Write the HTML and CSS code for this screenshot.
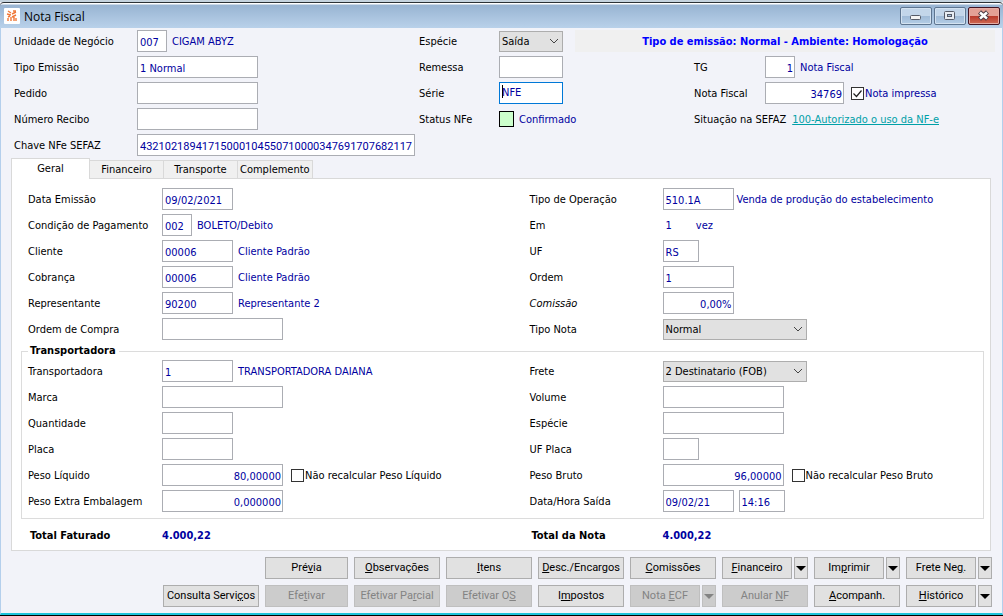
FILE: index.html
```html
<!DOCTYPE html>
<html lang="pt-BR">
  <head>
    <meta charset="UTF-8" />
    <meta name="viewport" content="width=device-width, initial-scale=1.0" />
    <title>Nota Fiscal</title>
    <link rel="stylesheet" href="styles.css">
  </head>
  <body>
    <header class="titlebar">
      <svg class="app-icon" viewBox="0 0 16 16" aria-hidden="true">
        <rect width="16" height="16" rx="1" fill="#fff" />
        <path d="M4 3l3 2M9 3l3 0M3 6l4 1M8 6l4-2M4 9l2-1M8 9l4-2M4 10v3M7 9v4M10 9v4M12 10v3" fill="none" stroke="#f07838" stroke-width="1.4" />
      </svg>
      <h1>Nota Fiscal</h1>
      <div class="window-buttons">
        <button type="button" aria-label="Minimizar">
          <svg viewBox="0 0 30 16"><rect x="9.5" y="7.5" width="10" height="4" rx="1" fill="#f4f4f4" stroke="#555b68" /></svg>
        </button>
        <button type="button" aria-label="Maximizar">
          <svg viewBox="0 0 30 16"><rect x="9.5" y="3.5" width="10" height="8" rx="1" fill="#e8edf3" stroke="#555b68" /><rect x="12.5" y="6.5" width="4" height="2" fill="#a9c3de" stroke="#555b68" /></svg>
        </button>
        <button type="button" class="close" aria-label="Fechar">
          <svg viewBox="0 0 30 16"><path d="M10.5 4l8 7M18.5 4l-8 7" stroke="#4b3a44" stroke-width="4.5" /><path d="M11 4.5l7 6M18 4.5l-7 6" stroke="#fff" stroke-width="2.5" /></svg>
        </button>
      </div>
    </header>

    <main>
      <section class="form-grid header-form">
        <label for="unidade">Unidade de Negócio</label>
        <div class="field"><input type="text" id="unidade" class="w-code" value="007" /><output>CIGAM ABYZ</output></div>
        <label for="especieNota">Espécie</label>
        <div class="field"><select id="especieNota" class="w-small"><option>Saída</option></select></div>
        <p class="banner">Tipo de emissão: Normal - Ambiente: Homologação</p>

        <label for="tipoEmissao">Tipo Emissão</label>
        <div class="field"><input type="text" id="tipoEmissao" class="w-large" value="1 Normal" /></div>
        <label for="remessa">Remessa</label>
        <div class="field span"><input type="text" id="remessa" class="w-small" /></div>
        <label for="tg">TG</label>
        <div class="field"><input type="text" id="tg" class="w-code number" value="1" /><output>Nota Fiscal</output></div>

        <label for="pedido">Pedido</label>
        <div class="field"><input type="text" id="pedido" class="w-large" /></div>
        <label for="serie">Série</label>
        <div class="field span"><div class="editing"><input type="text" id="serie" class="w-small" value="NFE" /></div></div>
        <label for="notaFiscal">Nota Fiscal</label>
        <div class="field"><input type="text" id="notaFiscal" class="w-note number" value="34769" /><label class="check printed"><input type="checkbox" checked />Nota impressa</label></div>

        <label for="recibo">Número Recibo</label>
        <div class="field"><input type="text" id="recibo" class="w-large" /></div>
        <span>Status NFe</span>
        <div class="field span"><div class="status-color"></div><output>Confirmado</output></div>
        <div class="field span sefaz"><span>Situação na SEFAZ</span><a href="#">100-Autorizado o uso da NF-e</a></div>

        <label for="chave">Chave NFe SEFAZ</label>
        <div class="field"><input type="text" id="chave" class="w-key" value="43210218941715000104550710000347691707682117" /></div>
      </section>

      <nav class="tabs">
        <button type="button" class="active">Geral</button>
        <button type="button">Financeiro</button>
        <button type="button">Transporte</button>
        <button type="button">Complemento</button>
      </nav>

      <section class="panel">
        <div class="form-grid">
          <label for="dataEmissao">Data Emissão</label>
          <div class="field"><input type="text" id="dataEmissao" class="w-medium" value="09/02/2021" /></div>
          <label for="operacao">Tipo de Operação</label>
          <div class="field"><input type="text" id="operacao" class="w-medium" value="510.1A" /><output class="tight">Venda de produção do estabelecimento</output></div>

          <label for="condicao">Condição de Pagamento</label>
          <div class="field"><input type="text" id="condicao" class="w-code" value="002" /><output>BOLETO/Debito</output></div>
          <span>Em</span>
          <div class="field times"><output>1</output><output>vez</output></div>

          <label for="cliente">Cliente</label>
          <div class="field"><input type="text" id="cliente" class="w-medium" value="00006" /><output>Cliente Padrão</output></div>
          <label for="uf">UF</label>
          <div class="field"><input type="text" id="uf" class="w-uf" value="RS" /></div>

          <label for="cobranca">Cobrança</label>
          <div class="field"><input type="text" id="cobranca" class="w-medium" value="00006" /><output>Cliente Padrão</output></div>
          <label for="ordem">Ordem</label>
          <div class="field"><input type="text" id="ordem" class="w-medium" value="1" /></div>

          <label for="representante">Representante</label>
          <div class="field"><input type="text" id="representante" class="w-medium" value="90200" /><output>Representante 2</output></div>
          <label for="comissao"><em>Comissão</em></label>
          <div class="field"><input type="text" id="comissao" class="w-medium number" value="0,00%" /></div>

          <label for="ordemCompra">Ordem de Compra</label>
          <div class="field"><input type="text" id="ordemCompra" class="w-large" /></div>
          <label for="tipoNota">Tipo Nota</label>
          <div class="field"><select id="tipoNota" class="w-select"><option>Normal</option></select></div>
        </div>

        <fieldset>
          <legend>Transportadora</legend>
          <div class="form-grid">
            <label for="transportadora">Transportadora</label>
            <div class="field"><input type="text" id="transportadora" class="w-medium" value="1" /><output>TRANSPORTADORA DAIANA</output></div>
            <label for="frete">Frete</label>
            <div class="field"><select id="frete" class="w-select"><option>2 Destinatario (FOB)</option></select></div>

            <label for="marca">Marca</label>
            <div class="field"><input type="text" id="marca" class="w-large" /></div>
            <label for="volume">Volume</label>
            <div class="field"><input type="text" id="volume" class="w-large" /></div>

            <label for="quantidade">Quantidade</label>
            <div class="field"><input type="text" id="quantidade" class="w-medium" /></div>
            <label for="especie">Espécie</label>
            <div class="field"><input type="text" id="especie" class="w-large" /></div>

            <label for="placa">Placa</label>
            <div class="field"><input type="text" id="placa" class="w-medium" /></div>
            <label for="ufPlaca">UF Placa</label>
            <div class="field"><input type="text" id="ufPlaca" class="w-uf" /></div>

            <label for="pesoLiquido">Peso Líquido</label>
            <div class="field"><input type="text" id="pesoLiquido" class="w-large number" value="80,00000" /><label class="check"><input type="checkbox" />Não recalcular Peso Líquido</label></div>
            <label for="pesoBruto">Peso Bruto</label>
            <div class="field"><input type="text" id="pesoBruto" class="w-large number" value="96,00000" /><label class="check"><input type="checkbox" />Não recalcular Peso Bruto</label></div>

            <label for="pesoExtra">Peso Extra Embalagem</label>
            <div class="field"><input type="text" id="pesoExtra" class="w-large number" value="0,000000" /></div>
            <label for="dataSaida">Data/Hora Saída</label>
            <div class="field"><input type="text" id="dataSaida" class="w-medium" value="09/02/21" /><input type="text" class="w-time" aria-label="Hora Saída" value="14:16" /></div>
          </div>
        </fieldset>

        <div class="form-grid totals">
          <span>Total Faturado</span>
          <output>4.000,22</output>
          <span>Total da Nota</span>
          <output>4.000,22</output>
        </div>
      </section>

      <footer class="actions">
        <button type="button" class="second">Pré<u>v</u>ia</button>
        <button type="button"><u>O</u>bservações</button>
        <button type="button"><u>I</u>tens</button>
        <button type="button"><u>D</u>esc./Encargos</button>
        <button type="button"><u>C</u>omissões</button>
        <div class="split"><button type="button"><u>F</u>inanceiro</button><button type="button" class="drop" aria-label="Mais opções de Financeiro"></button></div>
        <div class="split"><button type="button">Im<u>p</u>rimir</button><button type="button" class="drop" aria-label="Mais opções de Imprimir"></button></div>
        <div class="split"><button type="button">Frete Ne<u>g</u>.</button><button type="button" class="drop" aria-label="Mais opções de Frete"></button></div>

        <button type="button">Consulta Servi<u>ç</u>os</button>
        <button type="button" disabled>Efe<u>t</u>ivar</button>
        <button type="button" disabled>Efetivar Pa<u>r</u>cial</button>
        <button type="button" disabled>Efetivar O<u>S</u></button>
        <button type="button">I<u>m</u>postos</button>
        <div class="split"><button type="button" disabled>Nota <u>E</u>CF</button><button type="button" class="drop" disabled aria-label="Mais opções de Nota ECF"></button></div>
        <button type="button" disabled>Anular <u>N</u>F</button>
        <button type="button"><u>A</u>companh.</button>
        <div class="split"><button type="button"><u>H</u>istórico</button><button type="button" class="drop" aria-label="Mais opções de Histórico"></button></div>
      </footer>
    </main>
  </body>
</html>
```
FILE: styles.css
```css
* {
  box-sizing: border-box;
}

body {
  display: flex;
  flex-direction: column;
  min-height: 100vh;
  margin: 0;
  border-top: 2px solid #c5d3de;
  border-bottom: 1px solid #000;
  background: #f2f3f9;
  color: #000;
  font-family: "DejaVu Sans Condensed", "Noto Sans", sans-serif;
  font-size: 11px;
  line-height: 14px;
}

input,
select,
button {
  margin: 0;
  font: inherit;
}

/* Title bar */
.titlebar {
  display: flex;
  align-items: center;
  gap: 4px;
  height: 26px;
  padding: 1px 3px 0 4px;
  border-top: 1px solid #2c3236;
  border-radius: 4px 4px 0 0;
  background: linear-gradient(#fff 1px, #98b4d2 2px, #b9d1ea);
}

.app-icon {
  width: 16px;
  height: 16px;
}

h1 {
  flex: 1;
  margin: 0;
  padding-top: 2px;
  font-family: "Open Sans", "Noto Sans", sans-serif;
  font-size: 12px;
  font-weight: normal;
}

.window-buttons {
  display: flex;
  gap: 2px;
}

.window-buttons button {
  width: 32px;
  height: 18px;
  padding: 0;
  border: 1px solid #5e7590;
  border-radius: 2px;
  background: linear-gradient(#c3d6ea 50%, #9fbad7 50%, #b4cde6);
  box-shadow: inset 0 0 0 1px #d3e2f1;
}

.window-buttons svg {
  display: block;
  width: 30px;
  height: 16px;
}

.window-buttons .close {
  border-color: #431422;
  background: linear-gradient(#e3a095 50%, #b8382a 50%, #cf6a55);
  box-shadow: inset 0 0 0 1px #e5aca4;
}

/* Window body */
main {
  flex: 1;
  border: 1px solid #b4cfec;
  border-top: 0;
  border-bottom: 2px solid #1cc3da;
}

.form-grid {
  display: grid;
  grid-template-columns: 134px 367fr 133px 315fr;
  grid-auto-rows: 26px;
  align-items: center;
  white-space: nowrap;
}

.header-form {
  grid-template-columns: 123px 282fr 80px 76px 119fr 71px 230fr;
  padding: 0 7px 0 13px;
}

.field {
  display: flex;
  align-items: center;
  gap: 5px;
}

.span {
  grid-column: span 2;
}

label,
span,
output,
.sefaz a {
  padding-top: 2px;
}

.banner {
  grid-column: span 3;
  margin: 0;
  padding-top: 1px;
  background: #f0f0f0;
  color: #0000ff;
  font-weight: bold;
  line-height: 21px;
  text-align: center;
}

output {
  color: #0000a0;
}

.tight {
  margin-left: -2px;
}

.times {
  gap: 24px;
  padding-left: 3px;
}

.sefaz {
  gap: 6px;
}

.sefaz a {
  color: #00a0a8;
}

/* Fields */
input[type="text"] {
  height: 22px;
  padding: 2px 2px 0;
  border: 1px solid #abadb3;
  border-radius: 0;
  background: #fff;
  color: #0000a0;
}

input.number {
  padding-right: 1px;
  text-align: right;
}

select {
  height: 21px;
  padding: 1px 18px 0 2px;
  border: 1px solid #adadad;
  border-radius: 0;
  appearance: none;
  background: #e1e1e1 url("data:image/svg+xml,%3Csvg xmlns='http://www.w3.org/2000/svg' width='10' height='6'%3E%3Cpath d='M1 1l4 4 4-4' fill='none' stroke='%23444'/%3E%3C/svg%3E") no-repeat right 3px center;
  color: #000;
}

.w-code { width: 30px; }
.w-uf { width: 36px; }
.w-time { width: 46px; }
.w-small { width: 64px; }
.w-medium { width: 71px; }
.w-note { width: 79px; }
.w-large { width: 121px; }
.w-select { width: 144px; }

.w-key {
  width: 278px;
  font-family: Roboto, "Liberation Sans", sans-serif;
}

.editing {
  position: relative;
}

.editing input[type="text"] {
  display: block;
  padding-top: 0;
  padding-bottom: 2px;
  border-color: #0078d7;
}

.editing::before {
  content: "";
  position: absolute;
  top: 3px;
  left: 3px;
  width: 1px;
  height: 13px;
  background: #000;
}

.status-color {
  width: 15px;
  height: 16px;
  border: 1px solid #000;
  background: #ccffcc;
}

.check {
  display: flex;
  align-items: center;
  gap: 1px;
  margin-left: 3px;
}

.check input {
  width: 13px;
  height: 13px;
  margin-bottom: 2px;
  border: 1px solid #333;
  appearance: none;
  background: #fff;
}

.check input:checked {
  background: #fff url("data:image/svg+xml,%3Csvg xmlns='http://www.w3.org/2000/svg' width='11' height='11'%3E%3Cpath d='M1.5 5.5l3 3 5-6' fill='none' stroke='%23222' stroke-width='1.2'/%3E%3C/svg%3E");
}

.printed {
  margin-left: 2px;
  color: #0000a0;
}

/* Tabs */
.tabs {
  display: flex;
  align-items: flex-end;
  margin: 0 0 -1px 10px;
}

.tabs button {
  height: 19px;
  padding: 1px 2px 0;
  border: 1px solid #d9d9d9;
  border-left: 0;
  background: #f0f0f0;
}

.tabs button:nth-child(2),
.tabs button:nth-child(3) {
  width: 74px;
}

.tabs .active {
  position: relative;
  width: 79px;
  height: 21px;
  padding-bottom: 2px;
  border-left: 1px solid #d9d9d9;
  border-bottom: 0;
  background: #fff;
}

.panel {
  margin: 0 11px 0 10px;
  padding: 7px 6px 2px 9px;
  border: 1px solid #d9d9d9;
  background: #fff;
}

.panel > .form-grid {
  padding: 0 6px 0 7px;
}

fieldset {
  margin: 2px 0 0;
  padding: 0 5px 4px 6px;
  border: 1px solid #dcdcdc;
}

legend {
  padding: 0 3px 0 2px;
  font-weight: bold;
}

.totals {
  margin-top: 3px;
  font-weight: bold;
}

.totals span {
  padding-left: 2px;
}

/* Bottom buttons */
.actions {
  display: grid;
  grid-template-columns: 96px 83px repeat(7, 86px);
  gap: 6px;
  justify-content: end;
  padding: 6px 10px 6px 0;
}

.actions button {
  height: 22px;
  padding: 0;
  border: 1px solid #adadad;
  background: #e1e1e1;
  color: #000;
  font-family: Roboto, "Liberation Sans", sans-serif;
  white-space: nowrap;
}

.actions button:disabled {
  border-color: #bfbfbf;
  background: #cccccc;
  color: #838383;
}

.actions .second {
  grid-column: 2;
}

.split {
  display: flex;
  gap: 2px;
}

.split button {
  flex: 1;
}

.split .drop {
  display: flex;
  flex: 0 0 14px;
  align-items: center;
  justify-content: center;
}

.drop::before {
  content: "";
  border: 5px solid transparent;
  border-top-color: currentColor;
  border-bottom: 0;
}
```
